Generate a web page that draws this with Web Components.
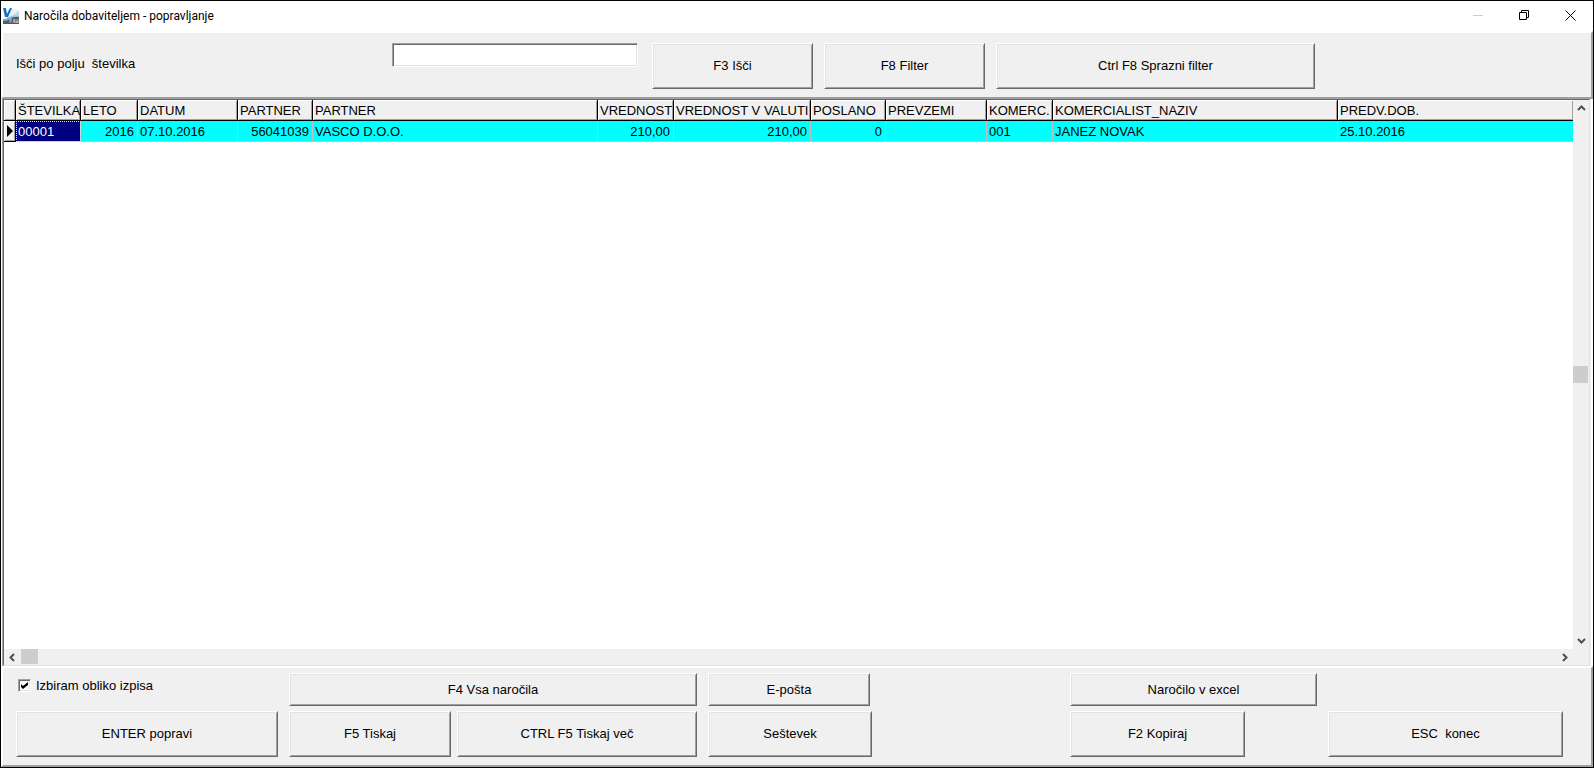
<!DOCTYPE html>
<html lang="sl">
<head>
<meta charset="utf-8">
<title>Naročila dobaviteljem - popravljanje</title>
<style>
  html, body { margin: 0; height: 100%; }
  body { font: 13px/16px "Liberation Sans", Arial, sans-serif; color: #000; background: #fff; }
</style>
</head>
<body>
<order-window></order-window>

<script>
const define = (name, html, setup) => {
  const template = document.createElement('template');
  template.innerHTML = html;
  customElements.define(name, class extends HTMLElement {
    constructor() {
      super();
      this.attachShadow({ mode: 'open' }).append(template.content.cloneNode(true));
      if (setup) setup(this.shadowRoot, this);
    }
  });
};

/* Raised push button */
define('bevel-button', `
  <style>
    :host { display: block; flex: none; }
    button {
      box-sizing: border-box; width: 100%; height: 100%; margin: 0; padding: 0;
      font: inherit; color: inherit; white-space: pre; background: #f0f0f0;
      border: 1px solid; border-color: #fff #696969 #696969 #fff;
      box-shadow: inset 1px 1px #e3e3e3, inset -1px -1px #a0a0a0;
    }
    button:active { border-color: #696969 #fff #fff #696969; }
  </style>
  <button type="button"><slot></slot></button>`);

/* Window caption */
define('title-bar', `
  <style>
    :host { display: flex; align-items: center; height: 30px; background: #fff; }
    .icon { flex: none; margin: 0 5px 0 2px; }
    h1 { flex: 1; margin: 0; font: 12px/16px Roboto, "Open Sans", sans-serif; white-space: nowrap; }
    button { align-self: flex-start; width: 46px; height: 28px; padding: 0; border: 0; background: none; display: grid; place-items: center; }
    svg { display: block; }
  </style>
  <svg class="icon" width="16" height="16" viewBox="0 0 16 16" aria-hidden="true">
    <path d="M5 1H14L16 3V10H5Z" fill="#e9f0f6"/>
    <path d="M4 9C8 9 12 6 16 3V11H4Z" fill="#b9d4e6"/>
    <path d="M0 12C5 11 9 8 16 9V16H0Z" fill="#55595e"/>
    <path d="M0 11C5 11 8 9 12 7C9 11 5 13 0 13Z" fill="#6fb0dc"/>
    <path d="M0 0H3L4 6L7 0H9L5 9H2Z" fill="#1470bd"/>
    <path d="M7 11h2M7 11v4M7 13h2M10 15l1-4l1 4M13 11v4l1-2l1 2v-4" fill="none" stroke="#d4d8dc" stroke-width=".7"/>
  </svg>
  <h1><slot></slot></h1>
  <button type="button" aria-label="Minimiraj" disabled>
    <svg width="11" height="11"><path d="M0 5.5H10" stroke="#ccc"/></svg></button>
  <button type="button" aria-label="Obnovi">
    <svg width="11" height="11"><path d="M.5 2.5H7.5V9.5H.5ZM2.5 2V.5H9.5V7.5H8" fill="none" stroke="#000"/></svg></button>
  <button type="button" aria-label="Zapri">
    <svg width="11" height="11"><path d="M.5 .5L10.5 10.5M10.5 .5L.5 10.5" stroke="#000"/></svg></button>`);

/* Search strip above the grid */
define('search-panel', `
  <style>
    :host {
      display: flex; align-items: flex-start; padding: 10px 13px 8px; background: #f0f0f0;
      border: 2px solid; border-color: #fff #a0a0a0 #a0a0a0 #fff;
    }
    label { flex: none; width: 376px; line-height: 42px; white-space: pre; }
    input {
      flex: none; box-sizing: border-box; width: 246px; height: 24px; margin: 0 14px 0 0; padding: 0 2px;
      font: inherit; background: #fff; border: 1px solid; border-color: #a0a0a0 #fff #fff #a0a0a0;
      box-shadow: inset 1px 1px #696969, inset -1px -1px #e3e3e3; outline: 0; border-radius: 0;
    }
    bevel-button { width: 161px; height: 46px; margin-right: 11px; }
    .wide { width: 319px; }
  </style>
  <label for="q">Išči po polju  številka</label>
  <input id="q" type="text">
  <bevel-button>F3 Išči</bevel-button>
  <bevel-button>F8 Filter</bevel-button>
  <bevel-button class="wide">Ctrl F8 Sprazni filter</bevel-button>`);

/* Scroll bar with two arrows; direction="vertical" or "horizontal" */
define('scroll-bar', `
  <style>
    :host { display: flex; background: #f0f0f0; }
    :host([direction=vertical]) { flex-direction: column; width: 16px; }
    :host([direction=horizontal]) { height: 16px; }
    button { flex: none; width: 17px; height: 17px; padding: 0; border: 0; background: none; display: grid; place-items: center; }
    :host([direction=vertical]) button { width: 16px; }
    :host([direction=horizontal]) button { height: 16px; }
    svg { display: block; }
    :host([direction=vertical]) svg { transform: rotate(90deg); }
    .track { flex: 1; display: flex; flex-direction: inherit; }
    :host([direction=vertical]) .track { justify-content: center; }
    .thumb { width: 17px; height: 15px; background: #cdcdcd; }
    :host([direction=vertical]) .thumb { width: 15px; height: 17px; }
  </style>
  <button type="button" aria-label="Nazaj"><svg width="9" height="9"><path d="M6 1L2.5 4.5L6 8" fill="none" stroke="#505050" stroke-width="2"/></svg></button>
  <div class="track"><div class="thumb"></div></div>
  <button type="button" aria-label="Naprej"><svg width="9" height="9"><path d="M3 1L6.5 4.5L3 8" fill="none" stroke="#505050" stroke-width="2"/></svg></button>`);

/* Table of orders */
const columns = [
  ['ŠTEVILKA', 65, '00001'], ['LETO', 57, '2016', 'num'], ['DATUM', 100, '07.10.2016'],
  ['PARTNER', 75, '56041039', 'num'], ['PARTNER', 285, 'VASCO D.O.O.'], ['VREDNOST', 76, '210,00', 'num'],
  ['VREDNOST V VALUTI', 137, '210,00', 'num'], ['POSLANO', 75, '0', 'num'], ['PREVZEMI', 101, ''],
  ['KOMERC.', 66, '001'], ['KOMERCIALIST_NAZIV', 285, 'JANEZ NOVAK'], ['PREDV.DOB.', 0, '25.10.2016'],
];
define('order-grid', `
  <style>
    :host { display: flex; margin: 0 2px 0 1px; border-left: 1px solid #a0a0a0; border-right: 1px solid #f0f0f0; }
    .frame {
      flex: 1; min-width: 0; display: grid; grid-template: minmax(0, 1fr) 16px / minmax(0, 1fr) 16px;
      background: #f0f0f0; border: 1px solid; border-color: #696969 #e3e3e3 #e3e3e3 #696969;
    }
    .view { background: #fff; overflow: hidden; }
    table { width: 100%; table-layout: fixed; border-collapse: separate; border-spacing: 0; }
    th, td { box-sizing: border-box; height: 21px; padding: 2px 2px 0; text-align: left; font-weight: normal; white-space: nowrap; overflow: hidden; line-height: 16px; }
    th { background: #f0f0f0; border-right: 1px solid #000; border-bottom: 1px solid #000; box-shadow: inset 1px 1px #fff, inset -1px -1px #a0a0a0; }
    td { background: #0ff; border-right: 1px solid #c0c0c0; border-bottom: 1px solid #c0c0c0; }
    th:last-child, td:last-child { border-right: 0; }
    td.num { text-align: right; padding-right: 3px; }
    td.mark { background: #f0f0f0; padding: 0 0 0 3px; border-color: #000; box-shadow: inset 1px 1px #fff, inset -1px -1px #a0a0a0; }
    td.current { background: #000080; color: #fff; outline: 1px dotted #ff0; outline-offset: -1px; }
    svg { display: block; }
  </style>
  <div class="frame">
    <div class="view"><table>
      <colgroup><col style="width:12px"></colgroup>
      <thead><tr><th aria-label="Izbor"></th></tr></thead>
      <tbody><tr><td class="mark"><svg width="6" height="12" aria-hidden="true"><path d="M0 0L6 6L0 12Z"/></svg></td></tr></tbody>
    </table></div>
    <scroll-bar direction="vertical"></scroll-bar>
    <scroll-bar direction="horizontal"></scroll-bar>
  </div>`, root => {
    const group = root.querySelector('colgroup');
    const head = root.querySelector('thead tr');
    const row = root.querySelector('tbody tr');
    columns.forEach(([title, width, value, kind], i) => {
      const col = document.createElement('col');
      if (width) col.style.width = width + 'px';
      group.append(col);
      const th = document.createElement('th');
      th.scope = 'col';
      th.textContent = title;
      head.append(th);
      const td = document.createElement('td');
      td.textContent = value;
      if (kind) td.className = kind;
      if (i === 0) td.className = 'current';
      row.append(td);
    });
  });

/* Tick box with its caption */
define('tick-box', `
  <style>
    :host { display: block; }
    label { display: flex; align-items: center; gap: 5px; height: 25px; white-space: nowrap; }
    input {
      appearance: none; box-sizing: border-box; flex: none; width: 13px; height: 13px; margin: 0; background: #fff;
      border: 1px solid; border-color: #a0a0a0 #fff #fff #a0a0a0;
      box-shadow: inset 1px 1px #696969, inset -1px -1px #e3e3e3; display: grid; place-items: center;
    }
    input:checked::before {
      content: ""; width: 7px; height: 7px; background: #000;
      clip-path: polygon(0 28%, 28% 57%, 100% 0, 100% 43%, 28% 100%, 0 71%);
    }
  </style>
  <label><input type="checkbox" checked><slot></slot></label>`);

/* Command buttons below the grid */
define('action-panel', `
  <style>
    :host {
      display: flex; flex-direction: column; gap: 5px; padding: 5px 28px 8px 13px; background: #f0f0f0;
      border: 2px solid; border-color: #fff #a0a0a0 #a0a0a0 #fff;
    }
    .row { display: flex; gap: 11px; }
    .pair { display: flex; gap: 6px; }
    .end { display: flex; gap: 11px; margin-left: auto; }
    .slot { width: 247px; }
    .low bevel-button { height: 33px; }
    .tall bevel-button { height: 46px; }
    tick-box { box-sizing: border-box; width: 262px; padding-left: 2px; }
    .w162 { width: 162px; } .w164 { width: 164px; } .w175 { width: 175px; } .w235 { width: 235px; }
    .w240 { width: 240px; } .w247 { width: 247px; } .w262 { width: 262px; } .w408 { width: 408px; }
  </style>
  <div class="row low">
    <tick-box>Izbiram obliko izpisa</tick-box>
    <bevel-button class="w408">F4 Vsa naročila</bevel-button>
    <bevel-button class="w162">E-pošta</bevel-button>
    <div class="end"><bevel-button class="w247">Naročilo v excel</bevel-button><div class="w235"></div></div>
  </div>
  <div class="row tall">
    <bevel-button class="w262">ENTER popravi</bevel-button>
    <div class="pair"><bevel-button class="w162">F5 Tiskaj</bevel-button><bevel-button class="w240">CTRL F5 Tiskaj več</bevel-button></div>
    <bevel-button class="w164">Seštevek</bevel-button>
    <div class="end"><div class="slot"><bevel-button class="w175">F2 Kopiraj</bevel-button></div><bevel-button class="w235">ESC  konec</bevel-button></div>
  </div>`);

define('order-window', `
  <style>
    :host { box-sizing: border-box; display: flex; flex-direction: column; height: 100vh; border: 1px solid #000; background: #fff; overflow: hidden; }
    title-bar, search-panel, action-panel { flex: none; }
    order-grid { flex: 1; min-height: 0; }
  </style>
  <title-bar>Naročila dobaviteljem - popravljanje</title-bar>
  <search-panel></search-panel>
  <order-grid></order-grid>
  <action-panel></action-panel>`);
</script>
</body>
</html>
